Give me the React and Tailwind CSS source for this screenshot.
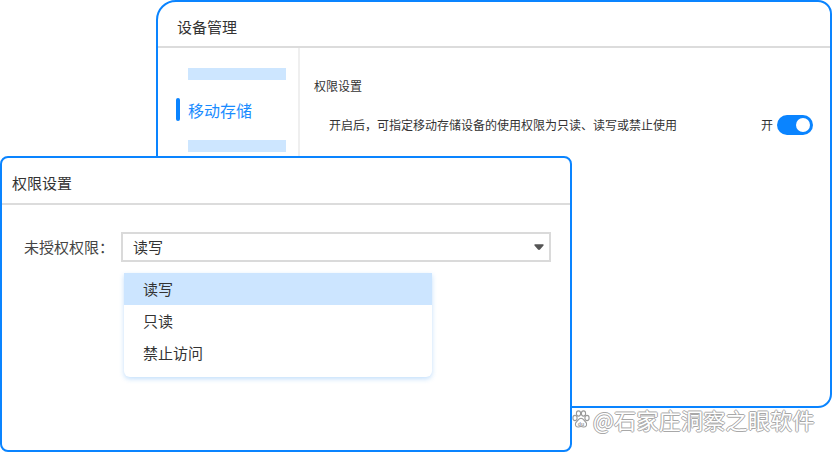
import { useState } from "react";

const font = "font-['Noto_Sans_CJK_SC','Noto_Sans',sans-serif]";

const options = ["读写", "只读", "禁止访问"];

const Toggle = ({ on }) => (
  <div
    className={`flex h-[20px] w-[36px] items-center rounded-full px-[3px] ${
      on ? "justify-end bg-[#0a84ff]" : "justify-start bg-[#c9c9c9]"
    }`}
  >
    <div className="h-[14px] w-[14px] rounded-full bg-white" />
  </div>
);

const DevicePanel = () => (
  <div className="absolute left-[156px] top-0 flex h-[408px] w-[676px] flex-col rounded-tl-[20px] rounded-tr-[14px] rounded-br-[14px] border-2 border-[#0a84ff] bg-white">
    <header className="flex h-[46px] items-center border-b-2 border-[#dcdcdc] px-[19px] pt-[6px] text-[15px] text-[#333]">
      设备管理
    </header>
    <div className="flex flex-1">
      <aside className="w-[142px] border-r-2 border-[#efefef]">
        <div className="ml-[30px] mt-[20px] h-[12px] w-[98px] bg-[#cde6ff]" />
        <div className="ml-[18px] mt-[18px] flex h-[23px] items-center gap-[8px]">
          <span className="h-[23px] w-[4px] rounded-full bg-[#0a84ff]" />
          <span className="text-[16px] text-[#1a8cff]">移动存储</span>
        </div>
        <div className="ml-[30px] mt-[19px] h-[12px] w-[98px] bg-[#cde6ff]" />
      </aside>
      <section className="flex-1 pl-[14px] pr-[17px] text-[12px] text-[#333]">
        <div className="mt-[29px] leading-[18px]">权限设置</div>
        <div className="mt-[20px] flex items-center">
          <span className="ml-[15px] flex-1">
            开启后，可指定移动存储设备的使用权限为只读、读写或禁止使用
          </span>
          <span className="mr-[4px]">开</span>
          <Toggle on />
        </div>
      </section>
    </div>
  </div>
);

const PermissionDialog = () => {
  const [value, setValue] = useState("读写");
  return (
    <div className="absolute left-0 top-[156px] flex h-[296px] w-[572px] flex-col rounded-[8px] border-2 border-[#0a84ff] bg-white">
      <header className="flex h-[47px] items-center border-b-2 border-[#dcdcdc] px-[10px] pt-[6px] text-[15px] text-[#333]">
        权限设置
      </header>
      <div className="mt-[27px] flex items-center pl-[22px] text-[15px] text-[#444]">
        <span className="w-[97px]">未授权权限：</span>
        <div className="relative">
          <div className="flex h-[30px] w-[430px] items-center justify-between border-2 border-[#dadada] pl-[10px] pr-[4px] text-[#333]">
            <span>{value}</span>
            <svg width="12" height="8" viewBox="0 0 12 8">
              <path d="M2 2h8L6.5 6a0.7 0.7 0 0 1-1 0z" fill="#555" stroke="#555" strokeWidth="1.4" strokeLinejoin="round" />
            </svg>
          </div>
          <ul className="absolute left-[3px] top-[41px] w-[308px] rounded-b-[6px] bg-white pb-[8px] shadow-[0_2px_5px_rgba(40,140,240,0.28)]">
            {options.map((opt) => (
              <li
                key={opt}
                onClick={() => setValue(opt)}
                className={`flex h-[32px] items-center pl-[19px] text-[15px] text-[#333] ${
                  opt === value ? "bg-[#cce5ff]" : ""
                }`}
              >
                {opt}
              </li>
            ))}
          </ul>
        </div>
      </div>
    </div>
  );
};

const PawIcon = () => (
  <svg width="20" height="20" viewBox="0 0 20 20">
    <g fill="#fff" stroke="#9a9a9a" strokeWidth="1.1">
      <ellipse cx="4" cy="9" rx="2.1" ry="2.6" />
      <ellipse cx="7.5" cy="4.5" rx="2.1" ry="2.6" />
      <ellipse cx="12.5" cy="4.5" rx="2.1" ry="2.6" />
      <ellipse cx="16" cy="9" rx="2.1" ry="2.6" />
      <path d="M10 9.2c-2.2 0-3 2.4-4.6 3.8-1.6 1.4-1.4 5 1.6 5 1.2 0 2-0.5 3-0.5s1.8 0.5 3 0.5c3 0 3.2-3.6 1.6-5C13 11.6 12.2 9.2 10 9.2z" />
    </g>
    <text x="10" y="16.6" textAnchor="middle" fontSize="5.2" fontFamily="Liberation Sans, sans-serif" fill="#9a9a9a" fontWeight="700">
      du
    </text>
  </svg>
);

export default function App() {
  return (
    <div className={`relative h-[452px] w-[832px] overflow-hidden bg-white ${font}`}>
      <DevicePanel />
      <PermissionDialog />
      <div className="absolute left-[571px] top-[406px] flex items-center gap-[2px]">
        <PawIcon />
        <span className="text-[22px] leading-[26px] tracking-[0.3px] text-white [text-shadow:1px_0_0_#a8a8a8,-1px_0_0_#a8a8a8,0_1px_0_#a8a8a8,0_-1px_0_#a8a8a8]">
          @石家庄洞察之眼软件
        </span>
      </div>
    </div>
  );
}
